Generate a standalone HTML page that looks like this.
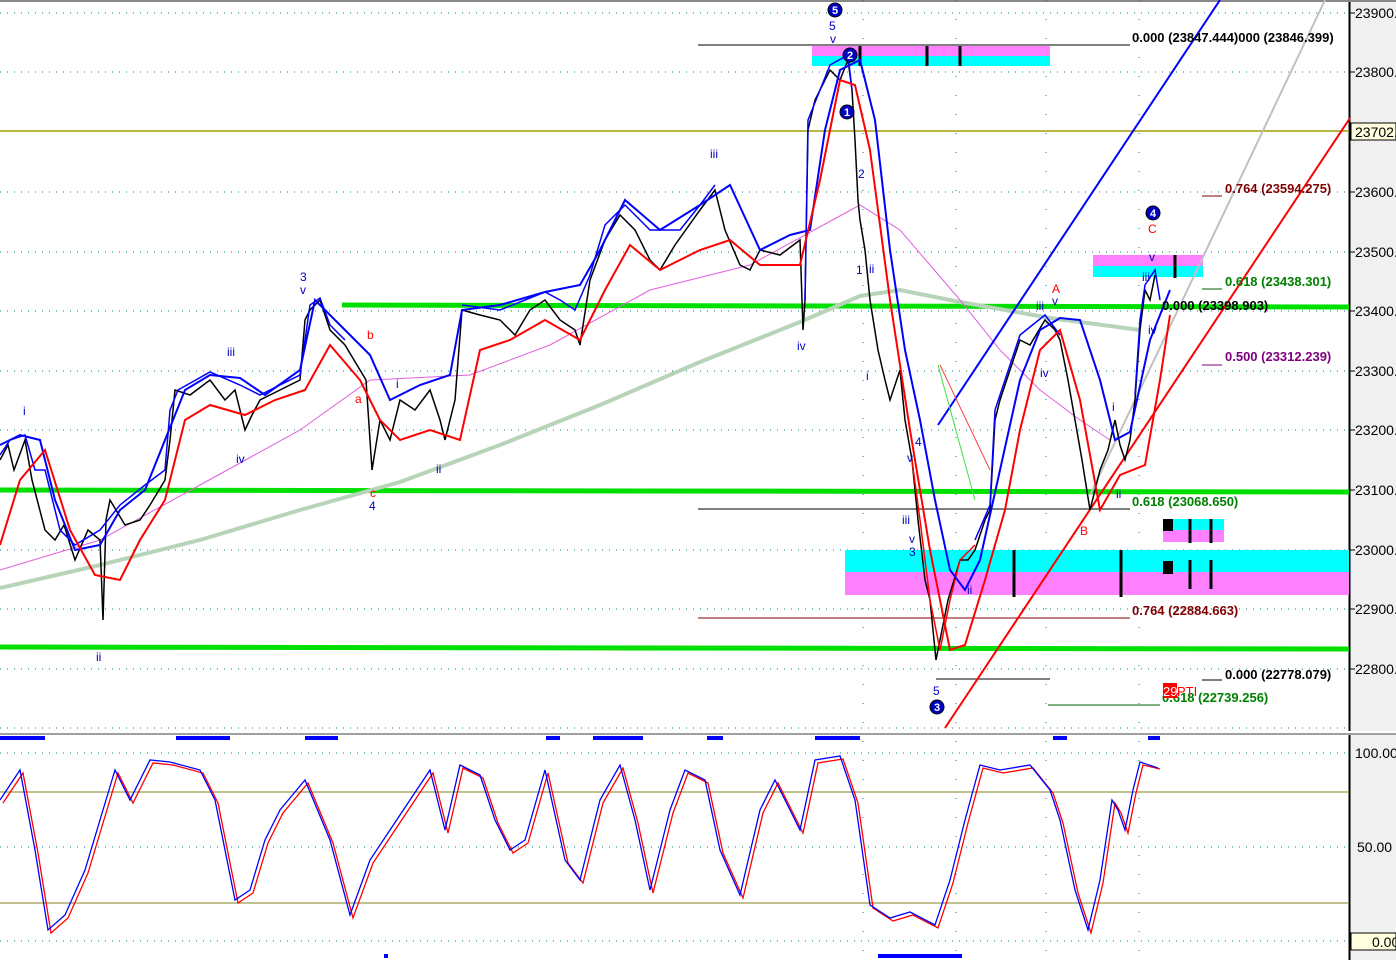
<!DOCTYPE html>
<html><head><style>
body{margin:0;background:#fff;width:1396px;height:960px;overflow:hidden;font-family:"Liberation Sans",sans-serif}
svg{display:block}
text{font-family:"Liberation Sans",sans-serif}
</style></head><body>
<svg width="1396" height="960" viewBox="0 0 1396 960" xmlns="http://www.w3.org/2000/svg">
<rect x="0" y="0" width="1396" height="960" fill="#fff"/>
<rect x="1350" y="0" width="46" height="960" fill="#f0f0f0"/>
<line x1="1349.5" y1="0" x2="1349.5" y2="960" stroke="#000" stroke-width="2"/>
<line x1="0" y1="1" x2="1396" y2="1" stroke="#888" stroke-width="2"/>
<g stroke="#008080" stroke-width="1" stroke-dasharray="1,6">
<line x1="0" y1="13" x2="1349" y2="13"/><line x1="0" y1="72" x2="1349" y2="72"/>
<line x1="0" y1="192" x2="1349" y2="192"/><line x1="0" y1="252" x2="1349" y2="252"/>
<line x1="0" y1="311" x2="1349" y2="311"/><line x1="0" y1="371" x2="1349" y2="371"/>
<line x1="0" y1="430" x2="1349" y2="430"/><line x1="0" y1="550" x2="1349" y2="550"/>
<line x1="0" y1="609" x2="1349" y2="609"/><line x1="0" y1="669" x2="1349" y2="669"/>
<line x1="0" y1="728" x2="1349" y2="728"/>
<line x1="0" y1="753" x2="1349" y2="753"/><line x1="0" y1="847" x2="1349" y2="847"/><line x1="0" y1="941" x2="1349" y2="941"/>
</g>
<g stroke="#008080" stroke-width="1" stroke-dasharray="1,18">
<line x1="863" y1="0" x2="863" y2="960"/><line x1="956" y1="0" x2="956" y2="960"/><line x1="1046" y1="0" x2="1046" y2="960"/><line x1="1139" y1="0" x2="1139" y2="960"/>
</g>
<line x1="0" y1="131" x2="1349" y2="131" stroke="#a0a000" stroke-width="1.5"/>
<rect x="812" y="46" width="238" height="10" fill="#ff80ff"/><rect x="812" y="56" width="238" height="10" fill="#00ffff"/>
<line x1="698" y1="45" x2="1130" y2="45" stroke="#000"/>
<rect x="1093" y="255" width="110" height="11" fill="#ff80ff"/><rect x="1093" y="266" width="110" height="11" fill="#00ffff"/>
<rect x="845" y="550" width="504" height="22" fill="#00ffff"/><rect x="845" y="572" width="504" height="23" fill="#ff80ff"/>
<rect x="1163" y="519" width="61" height="11" fill="#00ffff"/><rect x="1163" y="530" width="61" height="12" fill="#ff80ff"/>
<g stroke="#000" stroke-width="3">
<line x1="927" y1="46" x2="927" y2="66"/><line x1="960" y1="46" x2="960" y2="66"/><line x1="860" y1="46" x2="860" y2="66"/>
<line x1="1175" y1="255" x2="1175" y2="278"/>
<line x1="1014" y1="550" x2="1014" y2="597"/><line x1="1121" y1="550" x2="1121" y2="597"/>
<line x1="1190" y1="560" x2="1190" y2="589"/><line x1="1211" y1="560" x2="1211" y2="589"/>
<line x1="1190" y1="519" x2="1190" y2="543"/><line x1="1211" y1="519" x2="1211" y2="543"/>
</g>
<rect x="1163" y="519" width="10" height="12" fill="#000"/><rect x="1163" y="561" width="10" height="13" fill="#000"/>
<line x1="342" y1="305" x2="1349" y2="307" stroke="#00e000" stroke-width="5"/>
<line x1="0" y1="490" x2="1349" y2="492" stroke="#00e000" stroke-width="5"/>
<line x1="0" y1="647" x2="1349" y2="649" stroke="#00e000" stroke-width="5"/>
<g stroke-width="1">
<line x1="698" y1="509" x2="1130" y2="509" stroke="#000"/>
<line x1="698" y1="618" x2="1130" y2="618" stroke="#800000"/>
<line x1="936" y1="679" x2="1050" y2="679" stroke="#000"/>
<line x1="1048" y1="705" x2="1160" y2="705" stroke="#006000"/>
<line x1="1202" y1="196" x2="1222" y2="196" stroke="#800000"/>
<line x1="1202" y1="289" x2="1222" y2="289" stroke="#006000"/>
<line x1="1202" y1="365" x2="1222" y2="365" stroke="#800080"/>
<line x1="1202" y1="680" x2="1222" y2="680" stroke="#000"/>
</g>
<polyline fill="none" stroke="#b8d4b8" stroke-width="4" points="0,588 100,565 200,540 300,510 400,482 500,445 600,405 700,362 800,322 860,296 900,290 960,302 1050,318 1140,330"/>
<polyline fill="none" stroke="#e060e0" stroke-width="1" points="0,570 100,540 200,485 300,430 370,380 470,375 550,345 650,290 750,265 860,205 900,230 960,300 1000,350 1040,390 1080,420 1110,440"/>
<line x1="938" y1="425" x2="1220" y2="0" stroke="#0000ff" stroke-width="2"/>
<line x1="1090" y1="495" x2="1325" y2="0" stroke="#c0c0c0" stroke-width="2"/>
<line x1="945" y1="728" x2="1350" y2="118" stroke="#ff0000" stroke-width="2"/>
<line x1="940" y1="365" x2="990" y2="470" stroke="#ff4040" stroke-width="1"/>
<line x1="938" y1="365" x2="975" y2="500" stroke="#40e040" stroke-width="1"/>
<polyline fill="none" stroke="#000" stroke-width="1.5" points="0,460 8,445 14,470 25,440 32,480 45,530 55,540 64,525 75,560 88,530 100,540 103,620 106,520 110,500 125,525 140,520 150,505 165,480 170,440 175,390 190,395 210,380 225,400 235,390 245,430 252,415 260,400 280,390 300,380 305,320 310,310 320,300 330,330 345,345 360,370 366,380 372,470 380,420 390,440 400,400 415,410 430,390 440,420 445,440 455,400 462,310 480,315 500,320 515,335 530,310 545,300 560,320 575,330 580,345 590,280 605,240 620,215 635,230 650,260 660,270 675,245 700,210 715,190 725,230 740,265 750,270 760,250 780,255 800,240 803,330 805,300 808,130 815,100 830,70 840,80 848,60 852,90 855,140 858,200 860,220 865,250 870,300 878,350 885,380 890,400 900,370 905,420 912,460 918,520 925,580 930,600 936,660 940,640 948,600 960,560 968,560 975,550 985,520 990,510 995,420 1000,400 1010,370 1020,340 1030,345 1045,320 1055,330 1060,340 1068,380 1075,420 1082,460 1090,510 1095,490 1100,470 1108,450 1115,420 1120,445 1125,460 1130,440 1135,400 1140,330 1145,290 1150,300 1155,275"/>
<polyline fill="none" stroke="#0000ff" stroke-width="1.5" points="0,455 10,440 25,435 35,470 45,470 60,530 75,545 100,530 120,505 145,485 165,470 170,410 178,390 210,372 240,385 260,395 300,375 310,305 320,298 330,325 345,340"/>
<polyline fill="none" stroke="#0000ff" stroke-width="1.5" points="462,305 500,310 545,292 560,300 575,310 590,275 605,225 625,205 650,230 680,230 700,205 715,185"/>
<polyline fill="none" stroke="#0000ff" stroke-width="1.5" points="805,300 808,120 820,90 830,65 848,55 852,90"/>
<polyline fill="none" stroke="#ff0000" stroke-width="1.5" points="912,460 920,520 930,600 940,650 950,600 960,560 975,545"/>
<polyline fill="none" stroke="#0000ff" stroke-width="1.5" points="975,540 990,505 995,410 1000,395 1020,335 1045,315 1060,335"/>
<polyline fill="none" stroke="#0000ff" stroke-width="1.5" points="1135,395 1140,320 1145,285 1155,270 1160,300"/>
<polyline fill="none" stroke="#0000ff" stroke-width="2" points="0,445 20,435 40,440 55,500 75,550 100,545 120,510 145,490 165,440 185,390 210,375 240,378 265,395 300,370 315,300 340,325 370,355 390,400 420,385 450,375 462,310 500,305 545,292 580,285 600,250 625,200 660,230 700,205 730,185 760,250 790,235 810,230 825,130 840,70 860,60 875,120 890,250 905,350 920,420 935,500 950,570 965,590 980,560 1000,470 1020,380 1040,330 1060,318 1080,320 1100,380 1115,440 1130,432 1150,340 1170,290"/>
<polyline fill="none" stroke="#ff0000" stroke-width="2" points="0,545 20,480 45,450 70,530 95,575 120,580 140,540 165,500 185,420 210,405 245,415 275,400 305,390 330,345 360,380 380,420 400,440 430,430 460,440 480,350 510,340 545,320 580,340 605,290 630,245 660,270 700,250 730,240 760,265 800,265 820,180 840,80 855,85 870,150 890,300 910,430 930,550 950,650 965,645 985,580 1005,510 1020,430 1040,350 1060,330 1080,400 1100,510 1120,475 1145,465 1160,380 1170,315"/>
<g font-size="12" fill="#0000c0">
<text x="23" y="415">i</text><text x="96" y="661">ii</text><text x="227" y="356">iii</text><text x="236" y="463">iv</text>
<text x="300" y="281">3</text><text x="300" y="294">v</text><text x="436" y="473">ii</text><text x="396" y="388">i</text>
<text x="710" y="158">iii</text><text x="797" y="350">iv</text><text x="829" y="30">5</text><text x="830" y="43">v</text>
<text x="858" y="178">2</text><text x="856" y="274">1</text><text x="869" y="273">ii</text><text x="866" y="380">i</text>
<text x="915" y="446">4</text><text x="907" y="462">v</text><text x="902" y="524">iii</text><text x="909" y="543">v</text><text x="909" y="556">3</text>
<text x="933" y="695">5</text><text x="967" y="594">ii</text><text x="1036" y="310">iii</text><text x="1052" y="305">v</text>
<text x="1040" y="377">iv</text><text x="1112" y="411">i</text><text x="1116" y="498">ii</text><text x="1142" y="281">iii</text>
<text x="1149" y="261">v</text><text x="1148" y="334">iv</text><text x="369" y="510">4</text>
</g>
<g font-size="12" fill="#ff0000">
<text x="367" y="339">b</text><text x="355" y="403">a</text><text x="370" y="497">c</text>
<text x="1052" y="293">A</text><text x="1080" y="535">B</text><text x="1148" y="233">C</text>
</g>
<g fill="#0000c0" stroke="#000" stroke-width="1">
<circle cx="835" cy="10" r="7"/><circle cx="850" cy="55" r="7"/><circle cx="847" cy="112" r="7"/><circle cx="1153" cy="213" r="7"/><circle cx="937" cy="707" r="7"/>
</g>
<g font-size="11" font-weight="bold" fill="#fff" text-anchor="middle">
<text x="835" y="14">5</text><text x="850" y="59">2</text><text x="847" y="116">1</text><text x="1153" y="217">4</text><text x="937" y="711">3</text>
</g>
<g font-size="13" font-weight="bold">
<text x="1132" y="42" fill="#000">0.000 (23847.444)000 (23846.399)</text>
<text x="1225" y="193" fill="#800000">0.764 (23594.275)</text>
<text x="1225" y="286" fill="#008000">0.618 (23438.301)</text>
<text x="1162" y="310" fill="#000">0.000 (23398.903)</text>
<text x="1225" y="361" fill="#800080">0.500 (23312.239)</text>
<text x="1132" y="506" fill="#008000">0.618 (23068.650)</text>
<text x="1132" y="615" fill="#800000">0.764 (22884.663)</text>
<text x="1225" y="679" fill="#000">0.000 (22778.079)</text>
<text x="1162" y="702" fill="#008000">0.618 (22739.256)</text>
</g>
<rect x="1163" y="683" width="14" height="15" fill="#ff0000"/>
<text x="1163" y="696" font-size="13" fill="#fff">29</text><text x="1177" y="696" font-size="13" fill="#ff0000">PTI</text>
<g font-size="14" fill="#000">
<text x="1355" y="18">23900.</text><text x="1355" y="77">23800.</text>
<text x="1355" y="197">23600.</text><text x="1355" y="257">23500.</text><text x="1355" y="316">23400.</text>
<text x="1355" y="376">23300.</text><text x="1355" y="435">23200.</text><text x="1355" y="495">23100.</text>
<text x="1355" y="555">23000.</text><text x="1355" y="614">22900.</text><text x="1355" y="674">22800.</text>
<text x="1355" y="758">100.00</text><text x="1357" y="852">50.00</text>
</g>
<g stroke="#000"><line x1="1350" y1="13" x2="1355" y2="13"/><line x1="1350" y1="72" x2="1355" y2="72"/><line x1="1350" y1="192" x2="1355" y2="192"/><line x1="1350" y1="252" x2="1355" y2="252"/><line x1="1350" y1="311" x2="1355" y2="311"/><line x1="1350" y1="371" x2="1355" y2="371"/><line x1="1350" y1="430" x2="1355" y2="430"/><line x1="1350" y1="490" x2="1355" y2="490"/><line x1="1350" y1="550" x2="1355" y2="550"/><line x1="1350" y1="609" x2="1355" y2="609"/><line x1="1350" y1="669" x2="1355" y2="669"/></g>
<rect x="1351" y="123" width="45" height="17" fill="#ffffe0" stroke="#000"/>
<text x="1355" y="137" font-size="14" fill="#000">23702.</text>
<rect x="1351" y="933" width="45" height="17" fill="#ffffe0" stroke="#000"/>
<text x="1372" y="947" font-size="14" fill="#000">0.00</text>
<rect x="0" y="731" width="1396" height="4" fill="#fff"/>
<line x1="0" y1="734" x2="1396" y2="734" stroke="#a0a0a0" stroke-width="2"/>
<g fill="#0000ff">
<rect x="0" y="736" width="45" height="4"/><rect x="176" y="736" width="54" height="4"/><rect x="305" y="736" width="33" height="4"/>
<rect x="546" y="736" width="14" height="4"/><rect x="593" y="736" width="50" height="4"/><rect x="707" y="736" width="16" height="4"/>
<rect x="815" y="736" width="45" height="4"/><rect x="1053" y="736" width="14" height="4"/><rect x="1148" y="736" width="12" height="4"/>
<rect x="878" y="954" width="84" height="4"/><rect x="384" y="954" width="4" height="4"/>
</g>
<line x1="0" y1="792" x2="1349" y2="792" stroke="#808020"/>
<line x1="0" y1="903" x2="1349" y2="903" stroke="#808020"/>
<polyline fill="none" stroke="#ff0000" stroke-width="1.3" transform="translate(3,3)" points="0,800 20,770 35,850 48,930 65,915 85,870 100,820 115,770 130,800 150,760 170,762 200,770 215,800 235,900 250,890 265,840 280,810 305,780 330,840 350,915 370,860 390,830 410,800 430,770 445,830 460,765 480,775 495,820 510,850 525,840 545,770 565,860 580,880 600,800 620,765 635,820 650,890 670,810 685,770 705,780 720,850 740,895 760,810 775,780 790,810 800,830 815,760 840,756 855,800 870,905 890,918 910,912 935,925 950,880 965,820 980,765 1000,770 1030,765 1050,790 1060,820 1075,890 1088,930 1100,880 1112,800 1118,810 1125,830 1133,790 1140,762 1157,766"/>
<polyline fill="none" stroke="#0000ff" stroke-width="1.3" points="0,800 20,770 35,850 48,930 65,915 85,870 100,820 115,770 130,800 150,760 170,762 200,770 215,800 235,900 250,890 265,840 280,810 305,780 330,840 350,915 370,860 390,830 410,800 430,770 445,830 460,765 480,775 495,820 510,850 525,840 545,770 565,860 580,880 600,800 620,765 635,820 650,890 670,810 685,770 705,780 720,850 740,895 760,810 775,780 790,810 800,830 815,760 840,756 855,800 870,905 890,918 910,912 935,925 950,880 965,820 980,765 1000,770 1030,765 1050,790 1060,820 1075,890 1088,930 1100,880 1112,800 1118,810 1125,830 1133,790 1140,762 1158,768"/>
</svg>
</body></html>
